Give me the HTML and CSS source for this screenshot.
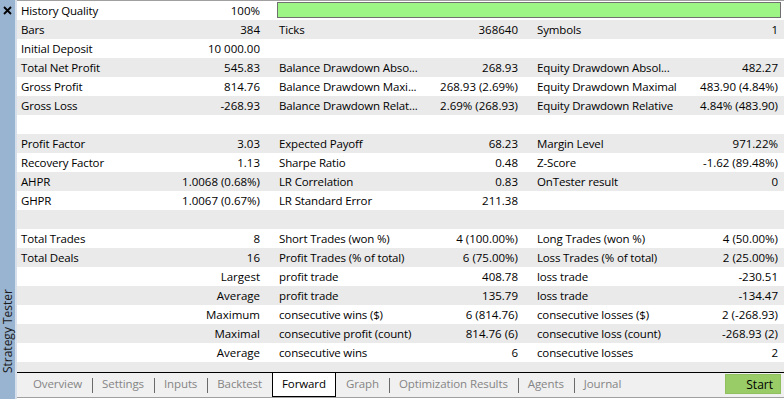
FILE: index.html
```html
<!DOCTYPE html>
<html lang="en">
<head>
    <meta charset="UTF-8">
    <title>Strategy Tester - Forward</title>
    <link rel="stylesheet" href="styles.css">
</head>
<body>
    <div class="sidebar">
        <svg class="close-icon" width="9" height="9" viewBox="0 0 9 9">
            <path d="M1 1 L8 8 M8 1 L1 8" stroke="#000" stroke-width="1.8" fill="none"/>
        </svg>
        <div class="sidebar-title">Strategy Tester</div>
    </div>
    <div class="sidebar-edge"></div>

    <div class="main">
        <div class="report">
            <div class="row">
                <div class="lbl">History Quality</div><div class="val">100%</div>
                <div class="quality-bar"></div>
            </div>
            <div class="row">
                <div class="lbl">Bars</div><div class="val">384</div>
                <div class="lbl">Ticks</div><div class="val">368640</div>
                <div class="lbl">Symbols</div><div class="val">1</div>
            </div>
            <div class="row">
                <div class="lbl">Initial Deposit</div><div class="val">10 000.00</div>
            </div>
            <div class="row">
                <div class="lbl">Total Net Profit</div><div class="val">545.83</div>
                <div class="lbl">Balance Drawdown Abso...</div><div class="val">268.93</div>
                <div class="lbl">Equity Drawdown Absol...</div><div class="val">482.27</div>
            </div>
            <div class="row">
                <div class="lbl">Gross Profit</div><div class="val">814.76</div>
                <div class="lbl">Balance Drawdown Maxi...</div><div class="val">268.93 (2.69%)</div>
                <div class="lbl">Equity Drawdown Maximal</div><div class="val">483.90 (4.84%)</div>
            </div>
            <div class="row">
                <div class="lbl">Gross Loss</div><div class="val">-268.93</div>
                <div class="lbl">Balance Drawdown Relat...</div><div class="val">2.69% (268.93)</div>
                <div class="lbl">Equity Drawdown Relative</div><div class="val">4.84% (483.90)</div>
            </div>
            <div class="row"></div>
            <div class="row">
                <div class="lbl">Profit Factor</div><div class="val">3.03</div>
                <div class="lbl">Expected Payoff</div><div class="val">68.23</div>
                <div class="lbl">Margin Level</div><div class="val">971.22%</div>
            </div>
            <div class="row">
                <div class="lbl">Recovery Factor</div><div class="val">1.13</div>
                <div class="lbl">Sharpe Ratio</div><div class="val">0.48</div>
                <div class="lbl">Z-Score</div><div class="val">-1.62 (89.48%)</div>
            </div>
            <div class="row">
                <div class="lbl">AHPR</div><div class="val">1.0068 (0.68%)</div>
                <div class="lbl">LR Correlation</div><div class="val">0.83</div>
                <div class="lbl">OnTester result</div><div class="val">0</div>
            </div>
            <div class="row">
                <div class="lbl">GHPR</div><div class="val">1.0067 (0.67%)</div>
                <div class="lbl">LR Standard Error</div><div class="val">211.38</div>
            </div>
            <div class="row"></div>
            <div class="row">
                <div class="lbl">Total Trades</div><div class="val">8</div>
                <div class="lbl">Short Trades (won %)</div><div class="val">4 (100.00%)</div>
                <div class="lbl">Long Trades (won %)</div><div class="val">4 (50.00%)</div>
            </div>
            <div class="row">
                <div class="lbl">Total Deals</div><div class="val">16</div>
                <div class="lbl">Profit Trades (% of total)</div><div class="val">6 (75.00%)</div>
                <div class="lbl">Loss Trades (% of total)</div><div class="val">2 (25.00%)</div>
            </div>
            <div class="row">
                <div class="lbl"></div><div class="val">Largest</div>
                <div class="lbl">profit trade</div><div class="val">408.78</div>
                <div class="lbl">loss trade</div><div class="val">-230.51</div>
            </div>
            <div class="row">
                <div class="lbl"></div><div class="val">Average</div>
                <div class="lbl">profit trade</div><div class="val">135.79</div>
                <div class="lbl">loss trade</div><div class="val">-134.47</div>
            </div>
            <div class="row">
                <div class="lbl"></div><div class="val">Maximum</div>
                <div class="lbl">consecutive wins ($)</div><div class="val">6 (814.76)</div>
                <div class="lbl">consecutive losses ($)</div><div class="val">2 (-268.93)</div>
            </div>
            <div class="row">
                <div class="lbl"></div><div class="val">Maximal</div>
                <div class="lbl">consecutive profit (count)</div><div class="val">814.76 (6)</div>
                <div class="lbl">consecutive loss (count)</div><div class="val">-268.93 (2)</div>
            </div>
            <div class="row">
                <div class="lbl"></div><div class="val">Average</div>
                <div class="lbl">consecutive wins</div><div class="val">6</div>
                <div class="lbl">consecutive losses</div><div class="val">2</div>
            </div>
            <div class="row row-tail"></div>
        </div>

        <div class="tabs">
            <div class="tab">Overview</div>
            <div class="tab sep">Settings</div>
            <div class="tab sep">Inputs</div>
            <div class="tab sep">Backtest</div>
            <div class="tab active">Forward</div>
            <div class="tab">Graph</div>
            <div class="tab sep">Optimization Results</div>
            <div class="tab sep">Agents</div>
            <div class="tab sep">Journal</div>
            <button class="start-button">Start</button>
        </div>
    </div>
</body>
</html>
```

FILE: styles.css
```css
* {
    margin: 0;
    padding: 0;
    box-sizing: border-box;
}

body {
    width: 784px;
    height: 399px;
    overflow: hidden;
    display: flex;
    background: #fff;
    color: #000;
    font-family: "Open Sans", "Noto Sans", sans-serif;
    font-size: 11.5px;
}

/* left docking bar */
.sidebar {
    width: 15px;
    background: #99b4d1;
    display: flex;
    flex-direction: column;
    justify-content: space-between;
    align-items: center;
    padding: 6px 0 26px;
}

.close-icon {
    display: block;
}

.sidebar-title {
    writing-mode: vertical-rl;
    transform: rotate(180deg);
    font-size: 12px;
    line-height: 13px;
    color: #1a1a1a;
}

.sidebar-edge {
    width: 2px;
    background: #d7e0ea;
}

.main {
    flex: 1;
    display: flex;
    flex-direction: column;
    border-top: 1px solid #a0a0a0;
}

/* report table */
.row {
    display: grid;
    grid-template-columns: 144px 114px 144px 114px 144px 107px;
    height: 19px;
    line-height: 19px;
    white-space: nowrap;
}

.row:nth-child(even) {
    background: #eaeaea;
}

.row-tail {
    height: 10px;
}

.lbl {
    padding-left: 4px;
    letter-spacing: -0.15px;
}

.val {
    text-align: right;
    padding-right: 15px;
}

.val:nth-child(6) {
    padding-right: 6px;
}

.quality-bar {
    grid-column: 3 / 7;
    margin: 1px 3px 2px 2px;
    border: 1px solid #707070;
    background: #9cf585;
}

/* bottom tabs */
.tabs {
    display: flex;
    height: 26px;
    padding-left: 6px;
    background: #f0f0f0;
    border-top: 1px solid #000;
    border-bottom: 1px solid #a0a0a0;
}

.tab {
    position: relative;
    height: 24px;
    padding: 0 10px;
    line-height: 22px;
    color: #858585;
    font-size: 11.5px;
    letter-spacing: -0.1px;
}

.tab.sep::before {
    content: "";
    position: absolute;
    left: 0;
    top: 5px;
    height: 15px;
    border-left: 1px solid #6a6a6a;
}

.tab.active {
    background: #fff;
    color: #000;
    border: 1px solid #000;
    border-top: 0;
    height: 24px;
    padding: 0 9px;
}

.start-button {
    margin: 1px 3px 0 auto;
    width: 56px;
    height: 20px;
    padding-right: 7px;
    text-align: right;
    background: #99cc66;
    border: 1px solid #8fbf5e;
    font-family: inherit;
    font-size: 12px;
    color: #000;
}
```
